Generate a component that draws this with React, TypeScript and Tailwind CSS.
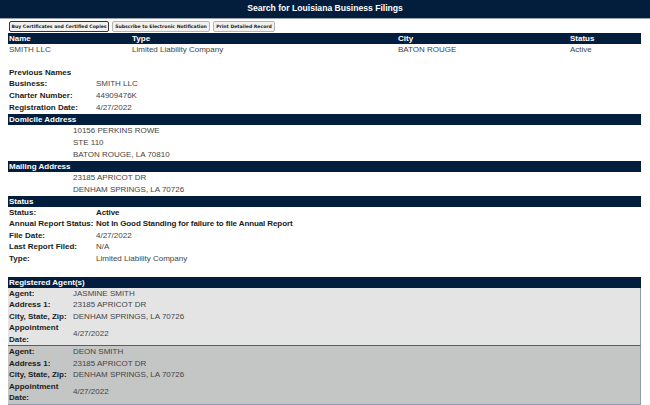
const navy = "bg-[#021e3c]";

function Bar({ children }: { children: React.ReactNode }) {
  return (
    <div className={`${navy} h-[11px] pl-[1px] text-[8px] leading-[11px] font-bold text-white`}>
      {children}
    </div>
  );
}

function Field({ label, value, bold }: { label: string; value: string; bold?: boolean }) {
  return (
    <div className="flex h-[11.6px] items-center pl-[1px]">
      <div className="w-[87px] font-bold text-[#1b1b1b]">{label}</div>
      <div className={bold ? "font-bold text-[#1b1b1b]" : "text-[#444]"}>{value}</div>
    </div>
  );
}

function StatusRow({ label, value, bold }: { label: string; value: string; bold?: boolean }) {
  return (
    <div className="flex h-[11.5px] items-center pl-[1px]">
      <div className="w-[87px] font-bold text-[#1b1b1b]">{label}</div>
      <div className={bold ? "font-bold tracking-[-0.1px] text-[#1b1b1b]" : "text-[#444]"}>{value}</div>
    </div>
  );
}

function AddrLine({ children }: { children: React.ReactNode }) {
  return <div className="flex h-[12px] items-center pl-[65px] text-[#444]">{children}</div>;
}

function Agent({ name, shade }: { name: string; shade: string }) {
  const rows: [string, string][] = [
    ["Agent:", name],
    ["Address 1:", "23185 APRICOT DR"],
    ["City, State, Zip:", "DENHAM SPRINGS, LA 70726"],
  ];
  return (
    <div className={`${shade} border-r border-r-[#8d9bab]`}>
      {rows.map(([l, v]) => (
        <div key={l} className="flex h-[11.5px] items-center pl-[1px]">
          <div className="w-[64px] font-bold text-[#1b1b1b]">{l}</div>
          <div className="text-[#444]">{v}</div>
        </div>
      ))}
      <div className="flex h-[23px] items-center pl-[1px]">
        <div className="w-[64px] font-bold leading-[11.5px] text-[#1b1b1b]">
          Appointment
          <br />
          Date:
        </div>
        <div className="text-[#444]">4/27/2022</div>
      </div>
    </div>
  );
}

const btn =
  "h-[11px] rounded-[2px] border bg-[#f1f1f1] text-[4.6px] leading-[9px] font-semibold text-[#222] text-center whitespace-nowrap";

export default function App() {
  return (
    <div className="h-[405px] w-[650px] overflow-hidden bg-white font-['Liberation_Sans',Arial,sans-serif] text-[8px]">
      <div className={`${navy} h-[19px] border-b border-b-[#9aa3ad] text-center text-[8.6px] leading-[17px] font-bold text-white`}>
        Search for Louisiana Business Filings
      </div>

      <div className="w-[641px] pl-[8px]">
        <div className="mt-[2px] flex gap-[3px] pl-[1px] font-['DejaVu_Sans',sans-serif]">
          <div className={`${btn} w-[100px] border-[#333]`}>Buy Certificates and Certified Copies</div>
          <div className={`${btn} w-[98px] border-[#b5b5b5]`}>Subscribe to Electronic Notification</div>
          <div className={`${btn} w-[62px] border-[#b5b5b5]`}>Print Detailed Record</div>
        </div>

        <div className={`${navy} mt-[1px] grid h-[11px] grid-cols-[123px_266px_172px_1fr] pl-[1px] text-[8px] leading-[11px] font-bold text-white`}>
          <div>Name</div>
          <div>Type</div>
          <div>City</div>
          <div>Status</div>
        </div>
        <div className="grid h-[12px] grid-cols-[123px_266px_172px_1fr] items-center pl-[1px] text-[#444]">
          <div>SMITH LLC</div>
          <div>Limited Liability Company</div>
          <div>BATON ROUGE</div>
          <div>Active</div>
        </div>

        <div className="mt-[11px]">
          <div className="flex h-[11.6px] items-center pl-[1px] font-bold text-[#1b1b1b]">Previous Names</div>
          <Field label="Business:" value="SMITH LLC" />
          <Field label="Charter Number:" value="44909476K" />
          <Field label="Registration Date:" value="4/27/2022" />
        </div>

        <div className="mt-[0.6px]">
          <Bar>Domicile Address</Bar>
          <AddrLine>10156 PERKINS ROWE</AddrLine>
          <AddrLine>STE 110</AddrLine>
          <AddrLine>BATON ROUGE, LA 70810</AddrLine>
        </div>

        <Bar>Mailing Address</Bar>
        <AddrLine>23185 APRICOT DR</AddrLine>
        <AddrLine>DENHAM SPRINGS, LA 70726</AddrLine>

        <Bar>Status</Bar>
        <StatusRow label="Status:" value="Active" bold />
        <StatusRow label="Annual Report Status:" value="Not In Good Standing for failure to file Annual Report" bold />
        <StatusRow label="File Date:" value="4/27/2022" />
        <StatusRow label="Last Report Filed:" value="N/A" />
        <StatusRow label="Type:" value="Limited Liability Company" />

        <div className="mt-[12.5px]">
          <Bar>Registered Agent(s)</Bar>
          <Agent name="JASMINE SMITH" shade="bg-[#e4e4e4] border-b border-b-[#55606b]" />
          <Agent name="DEON SMITH" shade="bg-[#c4c5c5] border-b border-b-[#8d9bab]" />
        </div>
      </div>
    </div>
  );
}
